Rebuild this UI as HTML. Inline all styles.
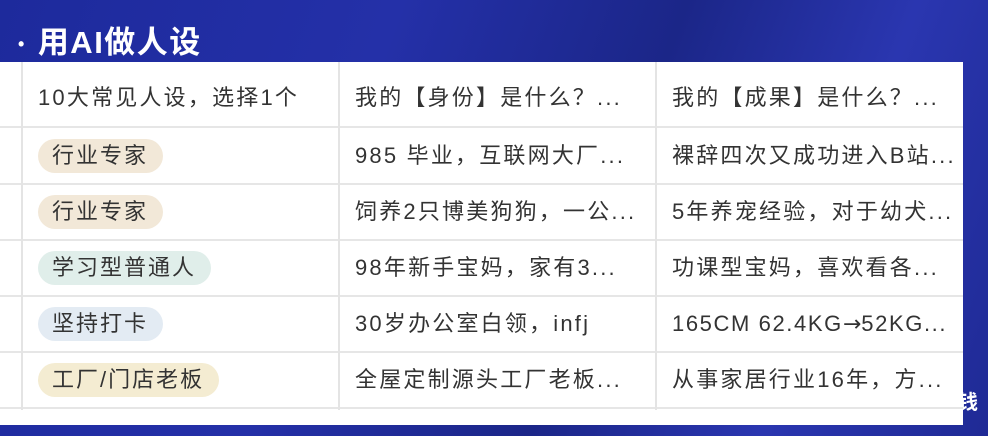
<!DOCTYPE html>
<html><head><meta charset="utf-8"><style>
*{margin:0;padding:0;box-sizing:border-box}
body{width:988px;height:436px;overflow:hidden;position:relative;font-family:"Liberation Sans","Noto Sans CJK SC",sans-serif;
background:linear-gradient(110deg,#1d2a9c 0%,#2430a8 35%,#1b2688 60%,#2a36b0 80%,#1f2a95 100%)}
.title{position:absolute;left:18px;top:17px;color:#fff;font-size:31px;font-weight:bold;letter-spacing:1.5px}
.title span{font-size:18px;vertical-align:middle;margin-right:12px}
.tbl{position:absolute;left:0;top:62px;width:963px;height:363px;background:#fff}
.hl{position:absolute;left:0;width:963px;height:2px;background:#e6e6e6}
.vl{position:absolute;top:0;width:2px;height:348px;background:#e4e4e4}
.c{position:absolute;font-size:22px;line-height:30px;letter-spacing:2.2px;color:#333;white-space:nowrap}
.tag{position:absolute;left:38px;height:34px;border-radius:17px;padding:0 15px 0 14px;font-size:22px;line-height:34px;letter-spacing:2px;color:#333}
.b{background:#f2e8d8}.g{background:#e0eeea}.bl{background:#e3ebf3}.y{background:#f4ecd2}
.qian{position:absolute;left:958px;top:386px;color:#fff;font-size:20px;font-weight:bold}
.ar{font-family:"DejaVu Sans",sans-serif;letter-spacing:0}
</style></head><body>
<div class="title"><span>•</span>用AI做人设</div>
<div class="qian">钱</div>
<div class="tbl">
<div class="hl" style="top:64px"></div>
<div class="hl" style="top:121px"></div>
<div class="hl" style="top:177px"></div>
<div class="hl" style="top:233px"></div>
<div class="hl" style="top:289px"></div>
<div class="hl" style="top:345px"></div>
<div class="vl" style="left:21px"></div>
<div class="vl" style="left:338px"></div>
<div class="vl" style="left:655px"></div>
<div class="c" style="left:38px;top:21px">10大常见人设，选择1个</div>
<div class="c" style="left:355px;top:21px">我的【身份】是什么？...</div>
<div class="c" style="left:672px;top:21px">我的【成果】是什么？...</div>

<div class="tag b" style="top:77px">行业专家</div>
<div class="c" style="left:355px;top:79px">985 毕业，互联网大厂...</div>
<div class="c" style="left:672px;top:79px">裸辞四次又成功进入B站...</div>

<div class="tag b" style="top:133px">行业专家</div>
<div class="c" style="left:355px;top:135px">饲养2只博美狗狗，一公...</div>
<div class="c" style="left:672px;top:135px">5年养宠经验，对于幼犬...</div>

<div class="tag g" style="top:189px">学习型普通人</div>
<div class="c" style="left:355px;top:191px">98年新手宝妈，家有3...</div>
<div class="c" style="left:672px;top:191px">功课型宝妈，喜欢看各...</div>

<div class="tag bl" style="top:245px">坚持打卡</div>
<div class="c" style="left:355px;top:247px">30岁办公室白领，infj</div>
<div class="c" style="left:672px;top:247px;letter-spacing:1.6px">165CM 62.4KG<span class="ar">→</span>52KG...</div>

<div class="tag y" style="top:301px">工厂/门店老板</div>
<div class="c" style="left:355px;top:303px">全屋定制源头工厂老板...</div>
<div class="c" style="left:672px;top:303px">从事家居行业16年，方...</div>
</div>
</body></html>
